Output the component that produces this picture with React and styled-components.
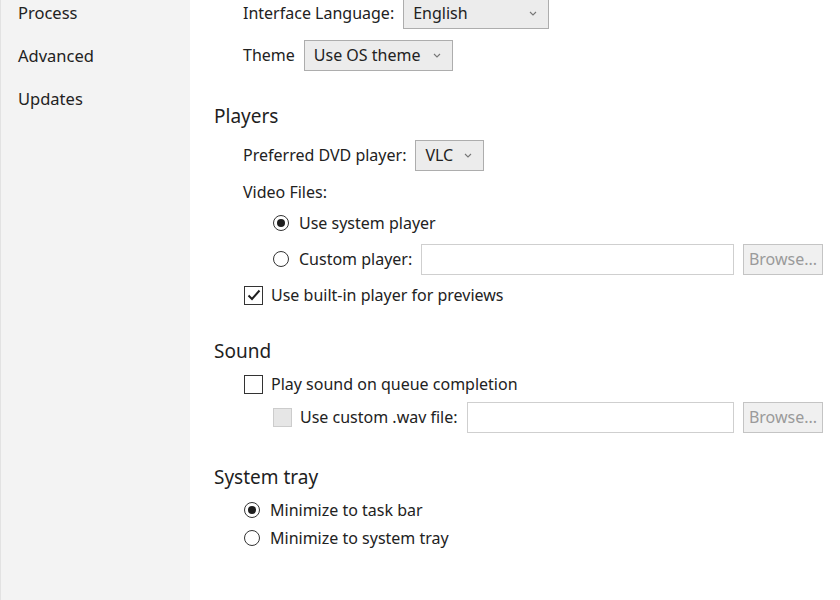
import React from "react";
import styled, { createGlobalStyle } from "styled-components";

const GlobalStyle = createGlobalStyle`
  html, body {
    margin: 0;
    padding: 0;
    background: #ffffff;
    overflow: hidden;
  }
  body {
    font-family: "Noto Sans", "Open Sans", sans-serif;
    color: #222222;
  }
`;

const Chevron = () => (
  <svg width="8" height="5" viewBox="0 0 8 5">
    <path d="M1 1l3 3 3-3" fill="none" stroke="#777" strokeWidth="1.1" />
  </svg>
);

const Tick = () => (
  <svg width="14" height="12" viewBox="0 0 14 12">
    <path d="M1.5 6.5l3.5 3.5L12.5 1.5" fill="none" stroke="#1e1e1e" strokeWidth="2" />
  </svg>
);

function App() {
  return (
    <Window>
      <GlobalStyle />
      <Sidebar>
        <NavItem>Process</NavItem>
        <NavItem>Advanced</NavItem>
        <NavItem>Updates</NavItem>
      </Sidebar>
      <Content>
        <Row $indent={29} $top={0}>
          <Label>Interface Language:</Label>
          <Select $width={146}>
            English
            <Chevron />
          </Select>
        </Row>
        <Row $indent={29} $top={10}>
          <Label>Theme</Label>
          <Select $width={149}>
            Use OS theme
            <Chevron />
          </Select>
        </Row>

        <Heading $top={31}>Players</Heading>
        <Row $indent={29} $top={9}>
          <Label>Preferred DVD player:</Label>
          <Select $width={69}>
            VLC
            <Chevron />
          </Select>
        </Row>
        <Row $indent={29} $top={9} $short>
          <Label>Video Files:</Label>
        </Row>
        <Row $indent={59} $top={7} $short>
          <Radio $checked />
          <Label>Use system player</Label>
        </Row>
        <Row $indent={59} $top={8}>
          <Radio />
          <Label>Custom player:</Label>
          <TextInput />
          <BrowseButton>Browse...</BrowseButton>
        </Row>
        <Row $indent={30} $top={8} $short>
          <Checkbox>
            <Tick />
          </Checkbox>
          <Label>Use built-in player for previews</Label>
        </Row>

        <Heading $top={30}>Sound</Heading>
        <Row $indent={30} $top={7} $short>
          <Checkbox />
          <Label>Play sound on queue completion</Label>
        </Row>
        <Row $indent={59} $top={5}>
          <Checkbox $disabled />
          <Label>Use custom .wav file:</Label>
          <TextInput />
          <BrowseButton>Browse...</BrowseButton>
        </Row>

        <Heading $top={30}>System tray</Heading>
        <Row $indent={30} $top={7} $short>
          <Radio $checked />
          <Label>Minimize to task bar</Label>
        </Row>
        <Row $indent={30} $top={4} $short>
          <Radio />
          <Label>Minimize to system tray</Label>
        </Row>
      </Content>
    </Window>
  );
}

export default App;

const Window = styled.div`
  display: flex;
  width: 840px;
  height: 600px;
  overflow: hidden;
`;

const Sidebar = styled.div`
  width: 190px;
  flex-shrink: 0;
  background: #f3f3f3;
  border-left: 1px solid #e2e2e2;
  box-sizing: border-box;
  display: flex;
  flex-direction: column;
  gap: 19px;
  padding: 1px 0 0 17px;
`;

const NavItem = styled.div`
  font-size: 16.5px;
  line-height: 24px;
  color: #222;
`;

const Content = styled.div`
  flex: 1;
  display: flex;
  flex-direction: column;
  padding: 0 17px 0 24px;
  margin-top: -3px;
`;

const Heading = styled.div`
  font-size: 19px;
  line-height: 28px;
  margin-top: ${(p) => p.$top}px;
  color: #1e1e1e;
`;

const Row = styled.div`
  display: flex;
  align-items: center;
  gap: 9px;
  height: ${(p) => (p.$short ? 24 : 32)}px;
  margin-top: ${(p) => p.$top}px;
  padding-left: ${(p) => p.$indent}px;
`;

const Label = styled.span`
  font-size: 16px;
  white-space: nowrap;
`;

const Select = styled.div`
  box-sizing: border-box;
  width: ${(p) => p.$width}px;
  height: 31px;
  display: flex;
  align-items: center;
  justify-content: space-between;
  padding: 0 11px 0 9px;
  background: #ececec;
  border: 1px solid #adadad;
  font-size: 16px;
`;

const Radio = styled.span`
  box-sizing: border-box;
  width: 16px;
  height: 16px;
  border-radius: 50%;
  border: 1px solid #333;
  background: #fff;
  position: relative;
  flex-shrink: 0;
  margin-right: 1px;

  &::after {
    content: "";
    display: ${(p) => (p.$checked ? "block" : "none")};
    position: absolute;
    left: 3px;
    top: 3px;
    width: 8px;
    height: 8px;
    border-radius: 50%;
    background: #1e1e1e;
  }
`;

const Checkbox = styled.span`
  box-sizing: border-box;
  width: 19px;
  height: 19px;
  display: flex;
  align-items: center;
  justify-content: center;
  flex-shrink: 0;
  margin-right: -1px;
  border: 1px solid ${(p) => (p.$disabled ? "#cccccc" : "#333333")};
  background: ${(p) => (p.$disabled ? "#e6e6e6" : "#ffffff")};
`;

const TextInput = styled.div`
  flex: 1;
  box-sizing: border-box;
  height: 31px;
  border: 1px solid #cfcfcf;
  background: #fff;
`;

const BrowseButton = styled.div`
  box-sizing: border-box;
  width: 80px;
  height: 31px;
  display: flex;
  align-items: center;
  justify-content: center;
  border: 1px solid #c4c4c4;
  background: #f0f0f0;
  color: #9a9a9a;
  font-size: 16px;
`;
